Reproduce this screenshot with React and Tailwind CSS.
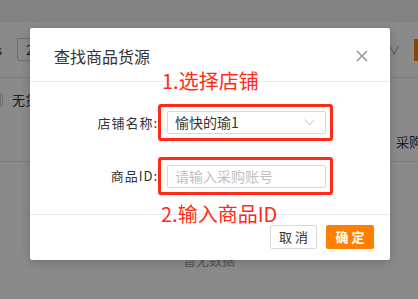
export default function App() {
  const font = { fontFamily: '"Noto Sans CJK SC", "Liberation Sans", sans-serif' };
  return (
    <div className="relative w-[418px] h-[299px] overflow-hidden bg-white" style={font}>
      {/* background page */}
      <div className="flex flex-col w-full h-full">
        <div className="h-[22px] bg-[#f0f0f0]" />
        <div className="h-[56px] flex items-center border-b border-[#e8e8e8] bg-white">
          <span className="text-[13px] text-[#333] w-[17px] -ml-[4px] pl-0">s</span>
          <div className="ml-[4px] w-[60px] h-[23px] border border-[#ccc] rounded-[2px] text-[13px] text-[#333] pl-2 leading-[21px]">2</div>
          <div className="flex-1" />
          <span className="text-[#999] text-[12px] mr-[14px]">∨</span>
          <div className="w-[4px] h-[22px] bg-[#ff8000]" />
        </div>
        <div className="h-[44px] flex items-center pl-0 gap-[3px] bg-white">
          <div className="w-[3px] h-[12px] border border-[#ccc]" />
          <span className="text-[13px] text-[#333] pl-[6px]">无货</span>
        </div>
        <div className="h-[40px] flex items-center justify-end bg-white border-b border-[#e8e8e8]">
          <span className="text-[13px] text-[#333] -mr-[4px]">采购</span>
        </div>
        <div className="flex-1 flex justify-center pt-[88px] bg-white">
          <span className="text-[13px] text-[#999]">暂无数据</span>
        </div>
      </div>

      {/* overlay */}
      <div className="absolute inset-0 bg-[rgba(0,0,0,0.46)]" />

      {/* modal */}
      <div className="absolute left-[30px] top-[28px] w-[360px] h-[232px] bg-white rounded-[2px] shadow-[0_2px_10px_rgba(0,0,0,0.2)] flex flex-col">
        <div className="h-[54px] flex items-center justify-between pl-[24px] pr-[22px] border-b border-[#ebebeb]">
          <span className="text-[16px] leading-[20px] text-[#333] mt-[2px]">查找商品货源</span>
          <svg width="12" height="12" viewBox="0 0 12 12" className="mt-[2px]">
            <path d="M1 1L11 11M11 1L1 11" stroke="#8c8c8c" strokeWidth="1.3" />
          </svg>
        </div>
        <div className="relative flex-1 flex flex-col border-b border-[#ebebeb]">
          <div className="absolute left-[132px] top-[-14px] text-[20px] leading-[26px] text-[#ff2a1a]">1.选择店铺</div>
          <div className="flex items-center mt-[22px] h-[37px]">
            <span className="w-[128px] text-right text-[13px] text-[#333] tracking-[1px]">店铺名称:</span>
            <div className="w-[175px] h-[37px] border-[3px] border-[#ff2a1a] rounded-[3px] flex items-center pl-[6px]">
              <div className="w-[159px] h-[23px] border border-[#d9d9d9] rounded-[2px] flex items-center justify-between pl-[7px] pr-[10px]">
                <span className="text-[14px] text-[#333]">愉快的瑜1</span>
                <svg width="11" height="7" viewBox="0 0 11 7"><path d="M0.5 0.5L5.5 6L10.5 0.5" stroke="#c0c0c0" fill="none" strokeWidth="1" /></svg>
              </div>
            </div>
          </div>
          <div className="flex items-center mt-[16px] h-[38px]">
            <span className="w-[128px] text-right text-[13px] text-[#333] tracking-[1px]">商品ID:</span>
            <div className="w-[175px] h-[38px] border-[3px] border-[#ff2a1a] rounded-[3px] flex items-center pl-[6px]">
              <div className="w-[159px] h-[23px] border border-[#d9d9d9] rounded-[2px] flex items-center pl-[7px]">
                <span className="text-[14px] text-[#bfbfbf]">请输入采购账号</span>
              </div>
            </div>
          </div>
          <div className="absolute left-[131px] top-[119px] text-[20px] leading-[26px] text-[#ff2a1a]">2.输入商品ID</div>
        </div>
        <div className="h-[45px] flex items-start justify-end pt-[10px] pr-[16px] gap-[9px]">
          <div className="w-[47px] h-[24px] border border-[#d9d9d9] rounded-[2px] flex items-center justify-center text-[13px] text-[#333] tracking-[3px] pl-[3px]">取消</div>
          <div className="w-[48px] h-[24px] bg-[#ff8000] rounded-[2px] flex items-center justify-center text-[13px] text-white font-bold tracking-[3px] pl-[3px]">确定</div>
        </div>
      </div>
    </div>
  );
}
